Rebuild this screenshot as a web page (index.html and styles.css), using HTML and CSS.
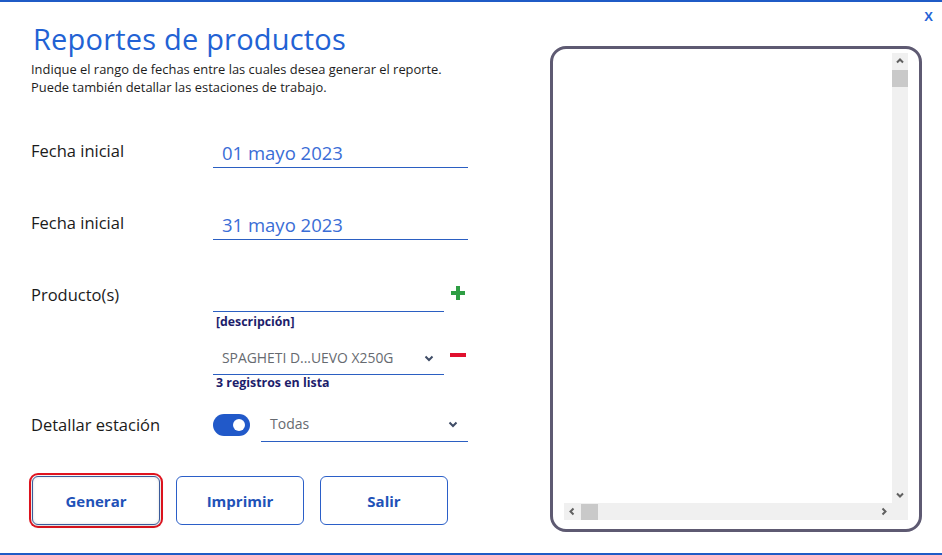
FILE: index.html
```html
<!DOCTYPE html>
<html lang="es">
<head>
<meta charset="utf-8">
<title>Reportes de productos</title>
<link rel="stylesheet" href="styles.css">
</head>
<body>
<div class="dialog">
  <button class="close" type="button">X</button>
  <section class="form">
    <h1 class="title">Reportes de productos</h1>
    <p class="subtitle">Indique el rango de fechas entre las cuales desea generar el reporte.<br>Puede también detallar las estaciones de trabajo.</p>

    <div class="row">
      <span class="label">Fecha inicial</span>
      <div class="input"><span class="value">01 mayo 2023</span></div>
    </div>
    <div class="row">
      <span class="label">Fecha inicial</span>
      <div class="input"><span class="value">31 mayo 2023</span></div>
    </div>
    <div class="row">
      <span class="label">Producto(s)</span>
      <div class="with-icon">
        <div class="input short"></div>
        <span class="icon-btn plus" aria-label="Agregar"><svg width="16" height="16" viewBox="0 0 16 16"><path d="M8 1v14M1 8h14" stroke="#2f9e44" stroke-width="4"/></svg></span>
      </div>
    </div>
    <div class="sub">
      <div class="hint">[descripción]</div>
      <div class="with-icon sel-row">
        <div class="select short">
          <span class="sel-text">SPAGHETI D...UEVO X250G</span>
          <svg class="chev" width="10" height="7" viewBox="0 0 10 7"><path d="M1.5 1.5 5 5 8.5 1.5" fill="none" stroke="#3f4c66" stroke-width="2"/></svg>
        </div>
        <span class="icon-btn minus" aria-label="Quitar"><svg width="16" height="16" viewBox="0 0 16 16"><path d="M0 8h16" stroke="#e0102e" stroke-width="4"/></svg></span>
      </div>
      <div class="hint count">3 registros en lista</div>
    </div>
    <div class="row detail">
      <span class="label">Detallar estación</span>
      <div class="detail-field">
        <span class="toggle"><span class="knob"></span></span>
        <div class="select station">
          <span class="sel-text">Todas</span>
          <svg class="chev" width="10" height="7" viewBox="0 0 10 7"><path d="M1.5 1.5 5 5 8.5 1.5" fill="none" stroke="#3f4c66" stroke-width="2"/></svg>
        </div>
      </div>
    </div>
    <div class="actions">
      <button class="btn focused" type="button">Generar</button>
      <button class="btn" type="button">Imprimir</button>
      <button class="btn" type="button">Salir</button>
    </div>
  </section>

  <section class="preview">
    <div class="scroller">
      <div class="content"></div>
      <div class="vbar">
        <svg width="16" height="16" viewBox="0 0 16 16"><path d="M5 9.5 8 6.5 11 9.5" fill="none" stroke="#606060" stroke-width="2"/></svg>
        <span class="vthumb"></span>
        <span class="spacer"></span>
        <svg width="16" height="16" viewBox="0 0 16 16"><path d="M5 6.5 8 9.5 11 6.5" fill="none" stroke="#606060" stroke-width="2"/></svg>
      </div>
      <div class="hbar">
        <svg width="16" height="17" viewBox="0 0 16 17"><path d="M9.5 5.5 6.5 8.5 9.5 11.5" fill="none" stroke="#606060" stroke-width="2"/></svg>
        <span class="hthumb"></span>
        <span class="spacer"></span>
        <svg width="16" height="17" viewBox="0 0 16 17"><path d="M6.5 5.5 9.5 8.5 6.5 11.5" fill="none" stroke="#606060" stroke-width="2"/></svg>
      </div>
      <div class="corner"></div>
    </div>
  </section>
</div>
</body>
</html>
```
FILE: styles.css
```css
html, body {
  margin: 0;
  padding: 0;
  background: #ffffff;
}
body {
  width: 942px;
  height: 555px;
  overflow: hidden;
  font-family: "Open Sans", "Noto Sans", sans-serif;
  color: #1b1b1b;
}
.dialog {
  position: relative;
  display: flex;
  height: 555px;
  box-sizing: border-box;
  border-top: 2px solid #1f5bc6;
  border-bottom: 2px solid #1f5bc6;
}
.close {
  position: absolute;
  top: 7px;
  right: 9px;
  border: 0;
  background: none;
  padding: 0;
  font-family: "Liberation Sans", sans-serif;
  font-weight: 700;
  font-size: 13px;
  color: #2563d6;
}
.form {
  width: 437px;
  padding-left: 31px;
  flex: none;
}
.title {
  margin: 19px 0 0 2px;
  font-size: 29px;
  line-height: 36px;
  font-weight: 400;
  color: #2262d4;
  letter-spacing: 0.2px;
}
.subtitle {
  margin: 3px 0 0;
  font-size: 12.9px;
  line-height: 18px;
  color: #1d1d1d;
}
.row {
  display: grid;
  grid-template-columns: 182px 255px;
  height: 72px;
  align-items: end;
}
.label {
  font-size: 16.5px;
  line-height: 24px;
  padding-bottom: 5px;
  color: #1b1b1b;
}
.input {
  height: 27px;
  border-bottom: 1px solid #2b5fc2;
  padding-left: 9px;
  box-sizing: content-box;
  display: flex;
  align-items: flex-end;
}
.value {
  font-size: 18.5px;
  line-height: 26px;
  padding-bottom: 1px;
  color: #3a6dd6;
}
.with-icon {
  display: flex;
  align-items: flex-end;
}
.input.short {
  width: 222px;
}
.icon-btn {
  display: flex;
  margin-left: 6px;
}
.plus {
  margin-bottom: 11px;
}
.sub {
  margin-left: 182px;
  width: 255px;
}
.hint {
  font-size: 12.3px;
  font-weight: 700;
  line-height: 20px;
  height: 20px;
  padding-left: 3px;
  color: #1d1d6b;
}
.hint.count {
  font-size: 12.4px;
  line-height: 16px;
  height: 16px;
}
.sel-row {
  height: 43px;
}
.select {
  display: flex;
  align-items: flex-end;
  justify-content: space-between;
  border-bottom: 1px solid #2b5fc2;
  box-sizing: border-box;
}
.select.short {
  width: 231px;
  height: 43px;
  padding: 0 10px 0 9px;
}
.sel-text {
  font-size: 13.9px;
  line-height: 20px;
  padding-bottom: 6px;
  color: #666a70;
}
.chev {
  margin-bottom: 12px;
}
.minus {
  margin-bottom: 12px;
}
.row.detail {
  height: 51px;
}
.row.detail .label {
  padding-bottom: 5px;
}
.detail-field {
  display: flex;
  align-items: flex-end;
}
.toggle {
  display: flex;
  align-items: center;
  justify-content: flex-end;
  width: 37px;
  height: 22px;
  margin-bottom: 6px;
  padding-right: 5px;
  box-sizing: border-box;
  border-radius: 11px;
  background: #2159c9;
}
.knob {
  width: 12px;
  height: 12px;
  border-radius: 50%;
  background: #ffffff;
}
.select.station {
  width: 207px;
  height: 36px;
  margin-left: 11px;
  padding: 0 10px 0 9px;
}
.select.station .sel-text {
  font-size: 14px;
  padding-bottom: 7px;
}
.select.station .chev {
  margin-bottom: 13px;
}
.actions {
  display: flex;
  gap: 16px;
  margin-top: 34px;
  padding-left: 1px;
}
.btn {
  width: 128px;
  height: 49px;
  border: 1px solid #2b5fc8;
  border-radius: 6px;
  background: #ffffff;
  font-family: "Open Sans", "Noto Sans", sans-serif;
  font-weight: 700;
  font-size: 15px;
  color: #1f52b8;
  padding: 0;
}
.btn.focused {
  border-color: #3a5a9a;
  box-shadow: inset 0 0 3px rgba(0,0,0,0.15), 0 1px 4px rgba(0,0,0,0.2), 0 0 0 1px #ffffff, 0 0 0 3px #e3141f;
}
.preview {
  width: 372px;
  height: 486px;
  margin: 44px 0 0 82px;
  box-sizing: border-box;
  border: 3px solid #5e5a72;
  border-radius: 16px;
  padding: 4px 11px 9px;
  flex: none;
}
.scroller {
  display: grid;
  grid-template-columns: 1fr 16px;
  grid-template-rows: 1fr 17px;
  height: 100%;
  background: #f0f0f0;
}
.content {
  background: #ffffff;
}
.vbar {
  display: flex;
  flex-direction: column;
  align-items: center;
}
.vthumb {
  width: 16px;
  height: 17px;
  margin-top: 1px;
  background: #c9c9c9;
}
.spacer {
  flex: 1;
}
.hbar {
  display: flex;
  align-items: center;
}
.hthumb {
  width: 17px;
  height: 16px;
  margin-left: 1px;
  background: #c9c9c9;
}
.corner {
  background: #f0f0f0;
}
```
